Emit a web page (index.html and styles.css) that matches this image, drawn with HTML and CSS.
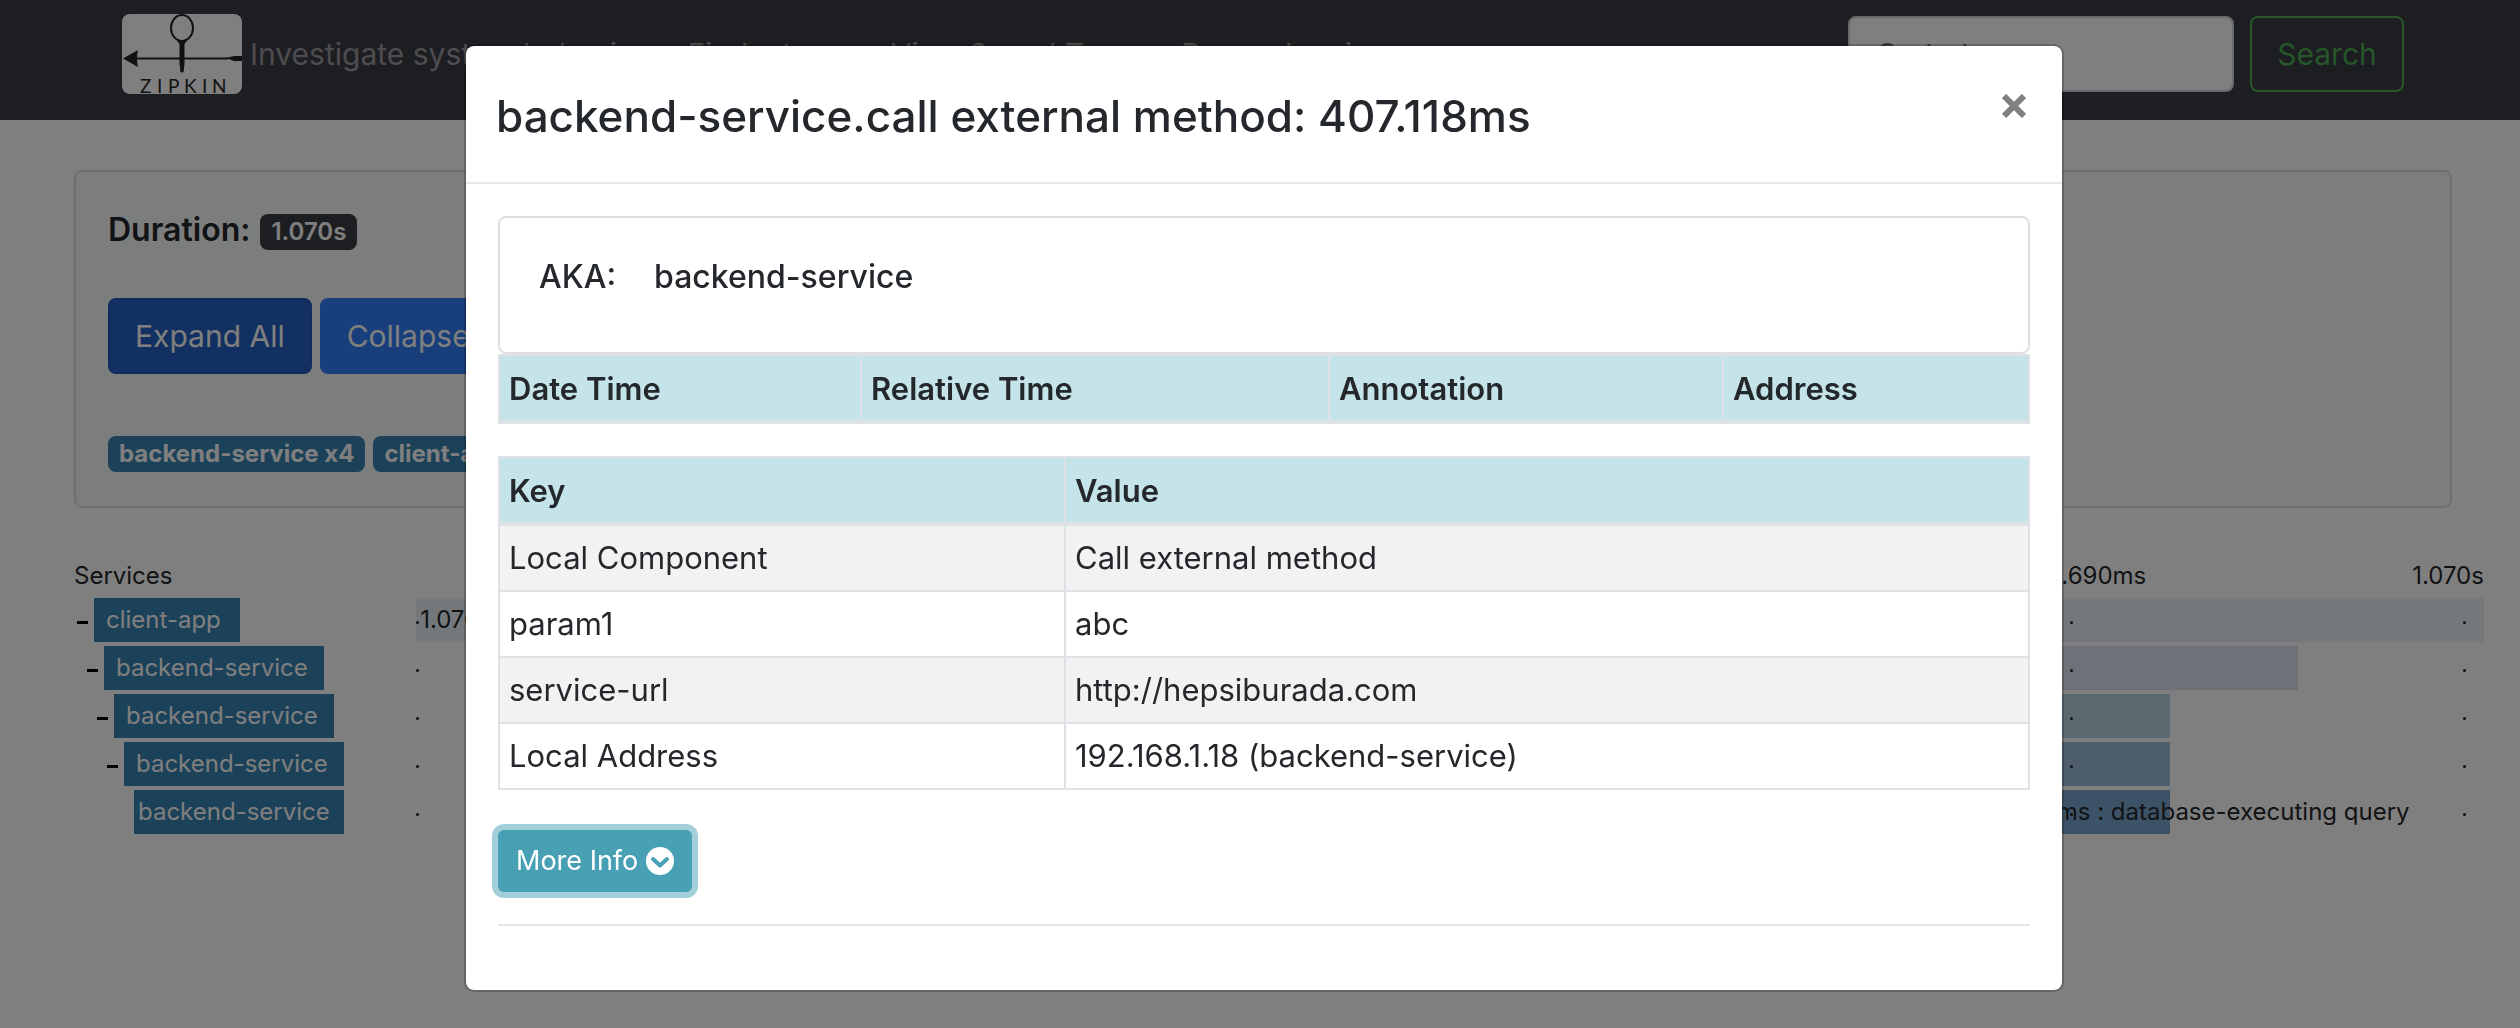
FILE: index.html
```html
<!DOCTYPE html>
<html lang="en">
<head>
<meta charset="utf-8">
<title>Zipkin - Trace</title>
<link rel="stylesheet" href="styles.css">
</head>
<body>
<header class="navbar">
  <a class="brand" href="#" aria-label="Zipkin home">
    <svg class="logo" viewBox="0 0 120 80" width="120" height="80">
      <rect width="120" height="80" rx="8" fill="#fff"/>
      <ellipse cx="60" cy="14" rx="11" ry="13" fill="none" stroke="#222" stroke-width="2"/>
      <path d="M55 26 Q60 28 65 26 L62 30 L62 50 L61 58 H59 L58 50 V30 Z" fill="#222" stroke="#222"/>
      <path d="M15 44.500H106" stroke="#222" stroke-width="2"/>
      <path d="M1 44.500 L16 36 Q14 44 16 53 Z" fill="#222"/>
      <path d="M104 44 L112 42 H120 V47 H112 Z" fill="#222"/>
      <text class="logo-text" x="18 35 46 62 80 90" y="79">ZIPKIN</text>
    </svg>
  </a>
  <span class="tagline">Investigate system behavior</span>
  <nav class="links">
    <a href="#">Find a trace</a>
    <a href="#">View Saved Trace</a>
    <a href="#">Dependencies</a>
  </nav>
  <form class="search">
    <input type="text" placeholder="Go to trace" aria-label="Go to trace">
    <button type="button">Search</button>
  </form>
</header>

<main class="page">
  <section class="summary">
    <div class="duration"><strong>Duration:</strong> <span class="badge dark">1.070s</span></div>
    <div class="actions">
      <button type="button" class="btn active">Expand All</button>
      <button type="button" class="btn">Collapse All</button>
    </div>
    <div class="badges"><span class="badge">backend-service x4</span><span class="badge">client-app x1</span></div>
  </section>

  <section class="trace">
    <div class="row head">
      <div>Services</div>
      <div class="ticks"><span>0ms</span><span>213.922ms</span><span>427.845ms</span><span>641.767ms</span><span>855.690ms</span><span>1.070s</span></div>
    </div>
    <div class="row">
      <div class="service"><i class="dash"></i><span class="name short">client-app</span></div>
      <div class="lane"><i></i><i></i><i></i><i></i><i></i><i></i><div class="bar b1" style="left:0%;width:100%"></div><span class="label" style="left:0.2%">1.070s : http:/</span></div>
    </div>
    <div class="row">
      <div class="service d1"><i class="dash"></i><span class="name">backend-service</span></div>
      <div class="lane"><i></i><i></i><i></i><i></i><i></i><i></i><div class="bar b2" style="left:30%;width:61%"></div></div>
    </div>
    <div class="row">
      <div class="service d2"><i class="dash"></i><span class="name">backend-service</span></div>
      <div class="lane"><i></i><i></i><i></i><i></i><i></i><i></i><div class="bar b3" style="left:46.8%;width:38%"></div></div>
    </div>
    <div class="row">
      <div class="service d3"><i class="dash"></i><span class="name">backend-service</span></div>
      <div class="lane"><i></i><i></i><i></i><i></i><i></i><i></i><div class="bar b4" style="left:46.8%;width:38%"></div></div>
    </div>
    <div class="row">
      <div class="service d4"><span class="name leaf">backend-service</span></div>
      <div class="lane"><i></i><i></i><i></i><i></i><i></i><i></i><div class="bar b5" style="left:75%;width:9.8%"></div><span class="label" style="right:3.6%">203.482ms : database-executing query</span></div>
    </div>
  </section>
</main>

<div class="overlay">
  <div class="modal" role="dialog" aria-labelledby="modal-title">
    <div class="modal-head">
      <h1 id="modal-title">backend-service.call external method: 407.118ms</h1>
      <button type="button" class="close" aria-label="Close"><svg viewBox="0 0 24 24" width="24" height="24"><path d="M2 2 L22 22 M22 2 L2 22" stroke="#808080" stroke-width="6"/></svg></button>
    </div>
    <div class="modal-body">
      <div class="aka"><span>AKA:</span><span>backend-service</span></div>
      <table class="annotations">
        <thead><tr><th>Date Time</th><th>Relative Time</th><th>Annotation</th><th>Address</th></tr></thead>
      </table>
      <table class="tags">
        <thead><tr><th>Key</th><th>Value</th></tr></thead>
        <tbody>
          <tr><td>Local Component</td><td>Call external method</td></tr>
          <tr><td>param1</td><td>abc</td></tr>
          <tr><td>service-url</td><td>http://hepsiburada.com</td></tr>
          <tr><td>Local Address</td><td>192.168.1.18 (backend-service)</td></tr>
        </tbody>
      </table>
      <button type="button" class="more">More Info
        <svg viewBox="0 0 28 28" width="28" height="28"><circle cx="14" cy="14" r="14" fill="#fff"/><path d="M7 12 L14 18.500 L21 12" fill="none" stroke="#48a0b5" stroke-width="4" stroke-linecap="round" stroke-linejoin="round"/></svg>
      </button>
      <hr>
    </div>
  </div>
</div>
</body>
</html>
```
FILE: styles.css
```css
* { box-sizing: border-box; }
body {
  margin: 0;
  background: #fff;
  color: #24272b;
  font-family: Inter, "Liberation Sans", sans-serif;
  font-size: 30px;
  line-height: 48px;
  overflow: hidden;
}
button, input { font: inherit; }
button { cursor: pointer; }

.navbar {
  display: flex;
  align-items: flex-start;
  height: 120px;
  padding: 14px 116px 0 122px;
  background: #3a3c44;
}
.logo { display: block; overflow: visible; }
.logo-text { font-family: Lato, sans-serif; font-size: 19px; fill: #222; }
.tagline { margin: 16px 0 0 8px; color: #9a9ba0; white-space: nowrap; }
.links { display: flex; gap: 36px; margin: 16px 0 0 41px; white-space: nowrap; }
.links a { color: #9a9ba0; text-decoration: none; }
.search { display: flex; gap: 16px; margin: 2px 0 0 auto; }
.search input {
  width: 386px;
  height: 76px;
  padding: 0 26px;
  border: 2px solid #ced4da;
  border-radius: 8px;
  background: #fff;
}
.search input::placeholder { color: #6c757d; opacity: 1; }
.search button {
  width: 154px;
  height: 76px;
  padding: 0;
  border: 2px solid #4cac52;
  border-radius: 8px;
  background: transparent;
  color: #4cac52;
}

.page { padding: 50px 36px 0 74px; }
.summary {
  margin-right: 32px;
  padding: 34px 32px;
  border: 2px solid #dcdfdd;
  border-radius: 8px;
  background: #f8fdfa;
}
.duration { display: flex; align-items: center; gap: 10px; height: 48px; }
.duration strong { font-size: 32px; font-weight: 600; line-height: 44px; }
.badge {
  display: inline-block;
  height: 36px;
  padding: 0 11px;
  border-radius: 8px;
  background: #3884b2;
  color: #fff;
  font-size: 24px;
  font-weight: 700;
  line-height: 36px;
  white-space: nowrap;
}
.badge.dark { margin-top: 4px; background: #3a3c44; font-weight: 600; }
.actions { display: flex; gap: 8px; margin-top: 44px; }
.btn {
  height: 76px;
  padding: 0 25px;
  border: 2px solid #327cf8;
  border-radius: 8px;
  background: #327cf8;
  color: #fff;
}
.btn.active { border-color: #2258b8; background: #2460c4; }
.badges { display: flex; gap: 8px; margin-top: 62px; }

.trace { margin-top: 50px; font-size: 24px; line-height: 36px; }
.row { display: grid; grid-template-columns: 342px 1fr; height: 44px; margin-bottom: 4px; }
.row.head { height: 36px; }
.ticks { display: flex; justify-content: space-between; padding-left: 120px; }
.service { display: flex; align-items: center; padding-left: 3px; }
.d1 { padding-left: 13px; }
.d2 { padding-left: 23px; }
.d3 { padding-left: 33px; }
.d4 { padding-left: 60px; }
.dash { width: 11px; height: 3px; margin-top: 4px; margin-right: 6px; background: #000; }
.name {
  width: 220px;
  height: 44px;
  padding-left: 12px;
  background: #3884b2;
  color: #fff;
  line-height: 44px;
  white-space: nowrap;
}
.short { width: 146px; }
.leaf { width: 210px; padding-left: 4px; }
.lane {
  position: relative;
  display: grid;
  grid-template-columns: 20% 20% 20% 20% 19% 1%;
  align-items: center;
}
.lane i { width: 3px; height: 3px; margin-top: 4px; border-radius: 2px; background: #222; }
.bar { position: absolute; top: 0; height: 44px; z-index: -1; }
.b1 { background: #e8f1f7; }
.b2 { background: #dfe3f3; }
.b3 { background: #bad2e0; }
.b4 { background: #9abad6; }
.b5 { background: #78a4cc; }
.label { position: absolute; top: 0; line-height: 44px; white-space: nowrap; }

.overlay {
  position: fixed;
  inset: 0;
  padding: 44px 0 0 8px;
  background: rgba(0, 0, 0, .5);
}
.modal {
  width: 1600px;
  max-width: 96%;
  margin: 0 auto;
  border: 2px solid rgba(0, 0, 0, .2);
  border-radius: 10px;
  background: #fff;
  background-clip: padding-box;
}
.modal-head {
  display: flex;
  justify-content: space-between;
  align-items: flex-start;
  height: 138px;
  padding: 34px 36px 0 30px;
  border-bottom: 2px solid #e6eaed;
}
.modal-head h1 { margin: 0; font-size: 44px; font-weight: 500; line-height: 72px; }
.close { margin-top: 14px; padding: 0; border: 0; background: none; line-height: 0; }
.modal-body { padding: 32px 32px 64px; }
.aka {
  display: flex;
  gap: 38px;
  height: 138px;
  padding: 35px 39px;
  border: 2px solid #dfdfdf;
  border-radius: 8px;
  font-size: 32px;
  font-weight: 500;
}
table { width: 100%; border-collapse: collapse; table-layout: fixed; font-size: 31px; }
th, td { height: 66px; padding: 8px 9px; border: 2px solid #dee2e6; text-align: left; font-weight: 400; }
th { height: 67px; background: #c5e4e9; border-bottom-width: 4px; font-weight: 600; }
.annotations { margin-bottom: 32px; }
.annotations th { padding-bottom: 7px; }
.tags th { padding-bottom: 7px; }
.annotations th:nth-child(1) { width: 362px; }
.annotations th:nth-child(2) { width: 468px; }
.annotations th:nth-child(3) { width: 394px; }
.tags th:first-child { width: 566px; }
.tags tbody tr:nth-child(odd) { background: #f2f2f2; }
.more {
  display: flex;
  align-items: center;
  gap: 8px;
  height: 62px;
  margin-top: 40px;
  padding: 0 18px;
  border: 0;
  border-radius: 6px;
  background: #48a0b5;
  box-shadow: 0 0 0 6px #a3cfda;
  color: #fff;
  font-size: 27px;
}
hr { margin: 32px 0 0; border: 0; border-top: 2px solid #e5e5e5; }
```
